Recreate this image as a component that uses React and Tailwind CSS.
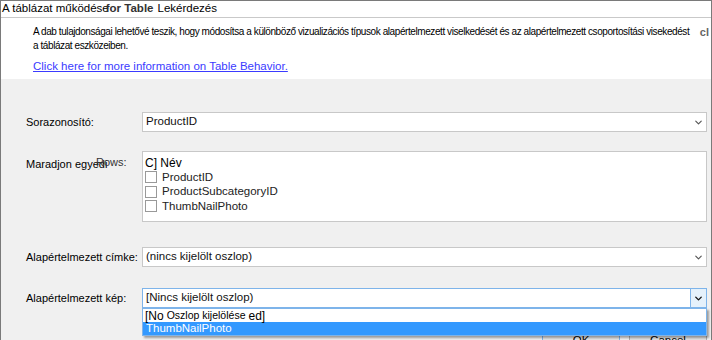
import { ChevronDown } from "lucide-react";

const font = { fontFamily: '"Liberation Sans", Arial, sans-serif' };

const Select = ({ value, active }) => (
  <div
    className={`h-[20px] flex items-center bg-white border ${
      active ? "border-[#7eb4ea]" : "border-[#c8c8c8]"
    }`}
  >
    <span className="flex-1 pl-[3px] text-[11.5px] text-[#111] whitespace-nowrap">{value}</span>
    <span
      className={`w-[16px] h-full flex items-center justify-center ${
        active ? "bg-[#e5f1fb] border-l border-[#7eb4ea]" : ""
      }`}
    >
      <ChevronDown size={11} strokeWidth={active ? 3 : 2.5} className={active ? "text-[#111]" : "text-[#555]"} />
    </span>
  </div>
);

const Check = ({ label }) => (
  <div className="flex items-center gap-[5px] h-[14.5px]">
    <span className="w-[12px] h-[12px] border border-[#999] bg-white"></span>
    <span className="text-[11.5px] text-[#222]">{label}</span>
  </div>
);

export default function App() {
  return (
    <div
      className="w-[712px] h-[340px] overflow-hidden bg-[#f0f0f0] border-t border-x border-[#7a7a7a] flex flex-col"
      style={font}
    >
      <div className="bg-white h-[78px] shrink-0 flex flex-col">
        <div className="h-[17px] flex items-center border-b border-[#c9c9c9] text-[11.5px] text-black pl-[1px]">
          <span>A táblázat működése</span>
          <span className="-ml-[3px] font-bold text-[#333]">for Table</span>
          <span className="ml-[4px]">Lekérdezés</span>
        </div>
        <div className="flex pl-[32px] pt-[7px] pr-[2px]">
          <div className="text-[10px] leading-[14px] text-black tracking-[-0.42px]">
            <div className="whitespace-nowrap">
              A dab tulajdonságai lehetővé teszik, hogy módosítsa a különböző vizualizációs típusok alapértelmezett viselkedését és az alapértelmezett csoportosítási visekedést
            </div>
            <div>a táblázat eszközeiben.</div>
          </div>
          <span className="ml-auto text-[11px] text-[#666] font-bold leading-[14px]">cl</span>
        </div>
        <a className="pl-[32px] mt-[5px] text-[11.5px] text-[#3b3bff] underline">
          Click here for more information on Table Behavior.
        </a>
      </div>

      <div className="flex-1 flex flex-col pl-[25px] pr-[4px] pt-[33px]">
        <div className="grid grid-cols-[116px_1fr] items-center">
          <span className="text-[11px] text-black whitespace-nowrap">Sorazonosító:</span>
          <Select value="ProductID" />
        </div>

        <div className="grid grid-cols-[116px_1fr] mt-[19px]">
          <div className="relative text-[11px] text-black pt-[5px] whitespace-nowrap">
            <span>Maradjon egyedi</span>
            <span className="absolute left-[70px] top-[3px] text-[#333]">Rows:</span>
          </div>
          <div className="h-[71px] bg-white border border-[#c8c8c8] pl-[2px] pt-[5px]">
            <div className="text-[12px] leading-[13px] text-black">C] Név</div>
            <Check label="ProductID" />
            <Check label="ProductSubcategoryID" />
            <Check label="ThumbNailPhoto" />
          </div>
        </div>

        <div className="grid grid-cols-[116px_1fr] items-center mt-[25px]">
          <span className="text-[11px] text-black whitespace-nowrap">Alapértelmezett címke:</span>
          <Select value="(nincs kijelölt oszlop)" />
        </div>

        <div className="grid grid-cols-[116px_1fr] items-center mt-[21px]">
          <span className="text-[11px] text-black whitespace-nowrap">Alapértelmezett kép:</span>
          <div className="relative">
            <Select value="[Nincs kijelölt oszlop)" active />
            <div className="absolute left-0 right-0 top-full z-10 bg-white border border-[#7eb4ea] shadow-[2px_2px_2px_rgba(0,0,0,0.35)]">
              <div className="h-[13px] flex items-center pl-[2px] text-[12px] text-black whitespace-nowrap">
                [No <span className="text-[10.5px] mx-[3px]">Oszlop kijelölése</span> ed]
              </div>
              <div className="h-[13px] flex items-center pl-[3px] bg-[#3399ff] text-white text-[11.5px]">
                ThumbNailPhoto
              </div>
            </div>
          </div>
        </div>

        <div className="flex justify-end gap-[9px] mt-[22px]">
          <div className="w-[78px] h-[22px] shrink-0 border border-[#7eb4ea] bg-[#e5e5e5] flex items-center justify-center text-[11.5px]">OK</div>
          <div className="w-[78px] h-[22px] shrink-0 border border-[#adadad] bg-[#e1e1e1] flex items-center justify-center text-[11.5px]">Cancel</div>
        </div>
      </div>
    </div>
  );
}
